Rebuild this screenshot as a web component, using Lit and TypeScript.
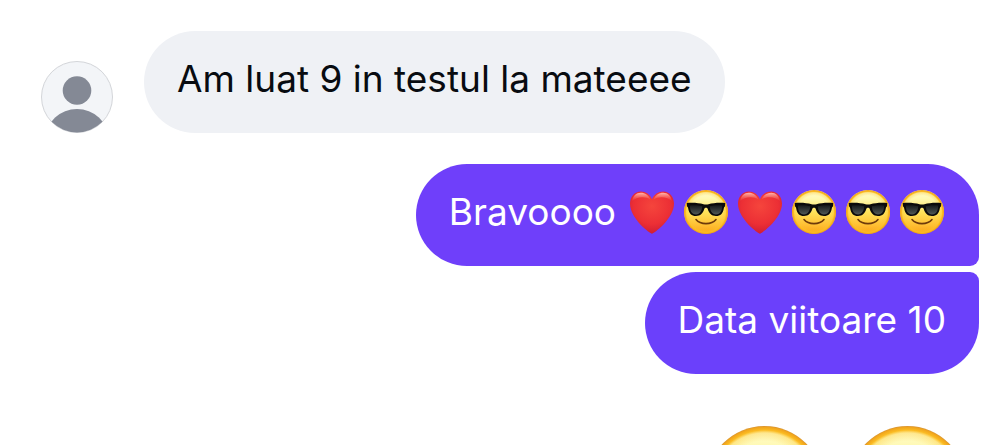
import { LitElement, html, css, svg } from "lit";
import { customElement, property } from "lit/decorators.js";

@customElement("chat-emoji")
class ChatEmoji extends LitElement {
  @property() kind = "cool";

  static styles = css`
    :host { display: block; flex: none; width: 54px; }
    .art { display: block; width: 100%; height: auto; }
  `;

  heart() {
    return svg`
      <defs>
        <radialGradient id="heart" cx="50%" cy="35%" r="70%">
          <stop offset="0" stop-color="#f5453c"></stop>
          <stop offset=".6" stop-color="#ec2f35"></stop>
          <stop offset="1" stop-color="#c91a34"></stop>
        </radialGradient>
        <linearGradient id="gloss" x1="0" y1="0" x2="0" y2="1">
          <stop offset="0" stop-color="#ffb9ae"></stop>
          <stop offset="1" stop-color="#ff6a5c" stop-opacity="0"></stop>
        </linearGradient>
      </defs>
      <path fill="url(#heart)" d="M27 43.800C25.500 43.800 5 29 5 13.600C5 6.500 9.600 1.400 15.800 1.400C20.800 1.400 25 4.200 27 9.200C29 4.200 33.200 1.400 38.200 1.400C44.400 1.400 49 6.500 49 13.600C49 29 28.500 43.800 27 43.800Z"></path>
      <path fill="url(#gloss)" d="M7 11.500C7.800 6 11.300 2.800 15.800 2.800C20 2.800 23.600 5.200 25.400 9.500C20.500 6.200 11.500 6.500 7 11.500Z"></path>
      <path fill="url(#gloss)" d="M47 11.500C46.200 6 42.700 2.800 38.200 2.800C34 2.800 30.400 5.200 28.600 9.500C33.500 6.200 42.500 6.500 47 11.500Z"></path>`;
  }

  cool() {
    return svg`
      <defs>
        <linearGradient id="face" x1="0" y1="0" x2="0" y2="1">
          <stop offset="0" stop-color="#fffbd0"></stop>
          <stop offset=".2" stop-color="#fff9b0"></stop>
          <stop offset=".5" stop-color="#ffe35a"></stop>
          <stop offset=".8" stop-color="#ffbf33"></stop>
          <stop offset="1" stop-color="#fa9d14"></stop>
        </linearGradient>
        <radialGradient id="rim" cx="50%" cy="50%" r="50%">
          <stop offset=".74" stop-color="#fdc52c" stop-opacity="0"></stop>
          <stop offset=".88" stop-color="#fdc52c" stop-opacity=".35"></stop>
          <stop offset=".93" stop-color="#fbbb22"></stop>
          <stop offset=".98" stop-color="#f0a41c"></stop>
          <stop offset="1" stop-color="#d4903c"></stop>
        </radialGradient>
        <linearGradient id="lens" x1="0" y1="0" x2="0" y2="1">
          <stop offset="0" stop-color="#15191a"></stop>
          <stop offset="1" stop-color="#505856"></stop>
        </linearGradient>
      </defs>
      <circle cx="27" cy="22" r="22" fill="url(#face)"></circle>
      <circle cx="27" cy="22" r="22" fill="url(#rim)"></circle>
      <path fill="none" stroke="#6d3a0b" stroke-width="1.600" stroke-linecap="round" d="M17 29.500C21.500 35 32.500 35 37 29.500"></path>
      <path fill="#0b0b0b" d="M7.800 13C13 12.300 20 12.800 24.500 14.200C26 14.700 28 14.700 29.500 14.200C34 12.800 41 12.300 46.200 13L46 16.500C45.300 16.800 45 17.500 44.800 18.500C44 23.500 41.500 26 37 26C32.500 26 30 23.500 28.700 18.800C28.300 17.300 25.700 17.300 25.300 18.800C24 23.500 21.500 26 17 26C12.500 26 10 23.500 9.200 18.500C9 17.500 8.700 16.800 8 16.500Z"></path>
      <path fill="url(#lens)" d="M10.800 15.500C15 14.800 20 15.200 23.200 16.300C23 20.800 21 24.400 17 24.400C12.500 24.400 11 21 10.800 15.500Z"></path>
      <path fill="url(#lens)" d="M43.200 15.500C39 14.800 34 15.200 30.800 16.300C31 20.800 33 24.400 37 24.400C41.500 24.400 43 21 43.200 15.500Z"></path>`;
  }

  render() {
    const heart = this.kind === "heart";
    return html`<svg class="art" viewBox="0 0 54 44" role="img" aria-label=${heart ? "inimă roșie" : "față cu ochelari de soare"}>
      ${heart ? this.heart() : this.cool()}
    </svg>`;
  }
}

@customElement("app-root")
class AppRoot extends LitElement {
  static styles = css`
    :host {
      display: block;
      box-sizing: border-box;
      height: 100vh;
      overflow: hidden;
      padding: 31px 21px 0 41px;
      background: #fff;
      color: #080b10;
      font: 400 37px/46px Inter, "Noto Sans", sans-serif;
    }
    .received { display: flex; align-items: flex-end; gap: 31px; }
    .avatar { display: block; flex: none; width: 72px; height: 72px; }
    .sent {
      display: flex;
      flex-direction: column;
      align-items: flex-end;
      gap: 6px;
      margin-top: 31px;
    }
    .bubble {
      display: flex;
      align-items: center;
      box-sizing: border-box;
      padding: 25px 33px 31px;
      border-radius: 51px;
      background: #eff1f5;
    }
    .mine { background: #6f3ffa; color: #fff; }
    .first { padding-right: 30px; border-bottom-right-radius: 9px; }
    .last { border-top-right-radius: 9px; background: #6b40fb; }
    .words { margin: 0; }
    .emojis { display: flex; margin-left: 9px; }
    .large { display: flex; justify-content: flex-end; margin-top: 52px; }
    .big { width: 143px; }
  `;

  render() {
    const reply = ["heart", "cool", "heart", "cool", "cool", "cool"];
    return html`
      <div class="received">
        <svg class="avatar" viewBox="0 0 72 72" role="img" aria-label="Avatar">
          <defs><clipPath id="disc"><circle cx="36" cy="36" r="35.500"></circle></clipPath></defs>
          <circle cx="36" cy="36" r="35.500" fill="#f3f5f8" stroke="#d3d5d9"></circle>
          <g clip-path="url(#disc)" fill="#848995">
            <circle cx="36" cy="29.500" r="14.300"></circle>
            <ellipse cx="36" cy="77" rx="31" ry="29"></ellipse>
          </g>
        </svg>
        <div class="bubble"><p class="words">Am luat 9 in testul la mateeee</p></div>
      </div>
      <div class="sent">
        <div class="bubble mine first">
          <p class="words">Bravoooo</p>
          <div class="emojis">${reply.map((kind) => html`<chat-emoji kind=${kind}></chat-emoji>`)}</div>
        </div>
        <div class="bubble mine last"><p class="words">Data viitoare 10</p></div>
      </div>
      <div class="large">
        <chat-emoji class="big"></chat-emoji>
        <chat-emoji class="big"></chat-emoji>
      </div>
    `;
  }
}
